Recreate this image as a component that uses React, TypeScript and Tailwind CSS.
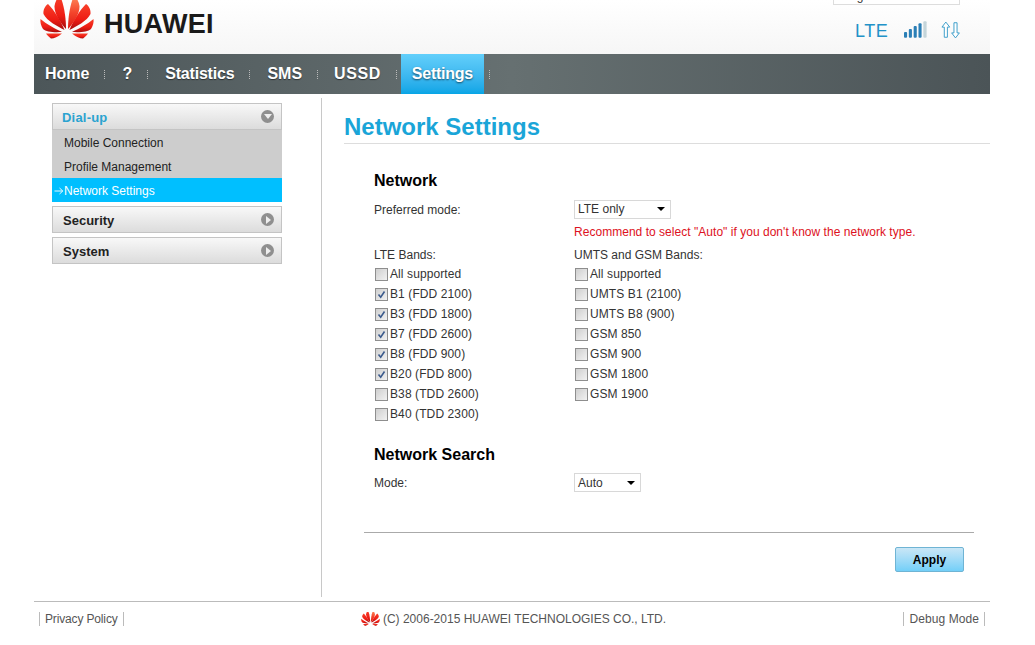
import * as React from "react";

const arial = "font-['Liberation_Sans',Arial,sans-serif]";

const lteBands = [
  { label: "All supported", on: false },
  { label: "B1 (FDD 2100)", on: true },
  { label: "B3 (FDD 1800)", on: true },
  { label: "B7 (FDD 2600)", on: true },
  { label: "B8 (FDD 900)", on: true },
  { label: "B20 (FDD 800)", on: true },
  { label: "B38 (TDD 2600)", on: false },
  { label: "B40 (TDD 2300)", on: false },
];

const umtsBands = ["All supported", "UMTS B1 (2100)", "UMTS B8 (900)", "GSM 850", "GSM 900", "GSM 1800", "GSM 1900"];

const navItems = [
  { label: "Home", track: "" },
  { label: "?", track: "" },
  { label: "Statistics", track: "tracking-[-0.2px]" },
  { label: "SMS", track: "" },
  { label: "USSD", track: "-ml-px tracking-[0.6px]" },
];

function Petals({ className, id }: { className: string; id: string }) {
  const petals = [
    "M6 33.5 L22 33.5 C18 37 14 38.5 11 38.5 C9 37 7 35 6 33.5 Z",
    "M0.5 19 C6 24 16 29 22 32 C14 32.5 6 32 3 29 C1 26 0 22 0.5 19 Z",
    "M8 4 C14 10 21 21 24.5 30 C17 26 7 21 3.5 14 C3 10 5 6 8 4 Z",
    "M20 -4 C24 4 26 18 26 29 C21 24 14 14 14.5 6 C15 2 17 -2 20 -4 Z",
  ];
  return (
    <svg viewBox="0 0 54 39" className={className}>
      <defs>
        <linearGradient id={id} x1="0" y1="0" x2="0" y2="1">
          <stop offset="0" stopColor="#f8402a" />
          <stop offset="0.6" stopColor="#ee1c14" />
          <stop offset="1" stopColor="#a80d0d" />
        </linearGradient>
        <linearGradient id={`${id}Top`} x1="0" y1="0" x2="0" y2="1">
          <stop offset="0" stopColor="#ff8a5c" />
          <stop offset="0.5" stopColor="#f4452c" />
          <stop offset="1" stopColor="#dd1712" />
        </linearGradient>
      </defs>
      {petals.map((d) => (
        <path key={d} d={d} fill={`url(#${id})`} />
      ))}
      <g transform="matrix(-1 0 0 1 54 0)">
        {petals.map((d, i) => (
          <path key={d} d={d} fill={i === 3 ? `url(#${id}Top)` : `url(#${id})`} />
        ))}
      </g>
    </svg>
  );
}

function Checkbox({ on }: { on: boolean }) {
  return (
    <span className="flex h-[13px] w-[13px] shrink-0 items-center justify-center border border-[#8e8e8e] bg-gradient-to-br from-[#cfcfcf] to-[#f2f2f2]">
      {on && (
        <svg viewBox="0 0 11 11" className="h-[11px] w-[11px]">
          <path d="M2.5 5.5 L4.7 8.2 L8.5 2.5" fill="none" stroke="#3b5a8c" strokeWidth="1.6" />
        </svg>
      )}
    </span>
  );
}

function Band({ label, on }: { label: string; on: boolean }) {
  return (
    <label className="flex h-5 items-center gap-[2px] pl-px text-[12px] tracking-[0.1px] text-[#333]">
      <Checkbox on={on} />
      <span>{label}</span>
    </label>
  );
}

function Select({ value, width }: { value: string; width: string }) {
  return (
    <div className={`flex h-[19px] items-center justify-between border border-[#d8d8d8] pl-[3px] pr-[4px] text-[12px] text-[#333] ${width}`}>
      <span>{value}</span>
      <span className="mr-[1px] h-0 w-0 border-x-[4px] border-t-[4px] border-x-transparent border-t-black" />
    </div>
  );
}

function SideHead({ label, open }: { label: string; open?: boolean }) {
  return (
    <div className="flex h-[27px] items-center justify-between border border-[#c4c4c4] bg-gradient-to-b from-[#f8f8f8] to-[#dcdcdc] pl-[10px] pr-[7px]">
      <span className={`pt-[3px] text-[13px] font-bold ${open ? "-ml-px tracking-[0.2px] text-[#2ba3d0]" : "text-[#222]"}`}>{label}</span>
      <span className="flex h-[13px] w-[13px] items-center justify-center rounded-full bg-[#8f8f8f]">
        {open ? (
          <span className="h-0 w-0 border-x-[4px] border-t-[5px] border-x-transparent border-t-[#eee]" />
        ) : (
          <span className="ml-px h-0 w-0 border-y-[4px] border-l-[5px] border-y-transparent border-l-[#eee]" />
        )}
      </span>
    </div>
  );
}

export default function App() {
  return (
    <div className={`${arial} h-[645px] w-[1035px] overflow-hidden bg-white pl-[34px]`}>
      <div className="w-[956px]">
        {/* top bar */}
        <div className="h-[54px] bg-gradient-to-b from-white to-[#f6f6f6]">
          <div className="flex h-full">
            <div className="ml-[6px] flex h-[39px] items-start overflow-hidden">
              <Petals id="logoBig" className="h-[39px] w-[54px]" />
              <span className="ml-[10px] mt-[10px] text-[27px] leading-[28px] font-bold tracking-[0.3px] text-[#1a1a1a]">HUAWEI</span>
            </div>
            <div className="ml-auto mr-[30px] flex w-[127px] flex-col items-stretch">
              <div className="h-[5px] overflow-hidden border border-t-0 border-[#ddd] bg-white">
                <div className="-mt-[11px] pl-[8px] text-[12px] leading-[14px] text-[#333]">English</div>
              </div>
              <div className="mt-[16px] flex h-[20px] items-center">
                <span className="ml-[22px] text-[18px] leading-[20px] tracking-[0.6px] text-[#2292c8]">LTE</span>
                <svg viewBox="0 0 25 17" className="mb-[3px] ml-[16px] h-[17px] w-[25px]">
                  <rect x="0" y="11" width="3.2" height="6" rx="1" fill="#2b7fb6" />
                  <rect x="5" y="8" width="3.2" height="9" rx="1" fill="#2b7fb6" />
                  <rect x="10" y="5" width="3.2" height="12" rx="1" fill="#2b7fb6" />
                  <rect x="15" y="2" width="3.2" height="15" rx="1" fill="#2b7fb6" />
                  <rect x="20" y="0" width="3.4" height="17" rx="1" fill="#c5d5da" />
                </svg>
                <svg viewBox="0 0 20 18" className="mb-[3px] ml-[12px] h-[18px] w-[20px]">
                  <path d="M5 0.8 L9 6 H6.6 V16.5 H3.4 V6 H1 Z" fill="white" stroke="#3a9dc9" strokeWidth="1" />
                  <path d="M15 17.2 L19 12 H16.6 V1.5 H13.4 V12 H11 Z" fill="white" stroke="#3a9dc9" strokeWidth="1" />
                </svg>
              </div>
            </div>
          </div>
        </div>

        {/* nav */}
        <nav className="flex h-10 items-stretch bg-gradient-to-r from-[#4c5659] via-[#667071] to-[#4b5457] pl-[11px] text-[16px] font-bold text-white">
          {navItems.map((item) => (
            <React.Fragment key={item.label}>
              <span className={`flex items-center [text-shadow:0_1px_1px_rgba(0,0,0,0.5)] ${item.track}`}>{item.label}</span>
              <span className="my-auto ml-[15px] mr-[17px] h-[9px] w-px border-l border-dotted border-[#bbb]" />
            </React.Fragment>
          ))}
          <span className="-ml-[13px] flex w-[83px] items-center justify-center bg-gradient-to-b from-[#62cffb] to-[#05a5e6] tracking-[-0.25px] [text-shadow:0_1px_2px_rgba(0,0,0,0.6)]">
            Settings
          </span>
          <span className="mx-[5px] my-auto h-[9px] w-px border-l border-dotted border-[#bbb]" />
        </nav>

        {/* body */}
        <div className="flex h-[503px] pt-1">
          <aside className="h-[499px] w-[288px] border-r border-[#c8c8c8] pl-[18px] pt-[5px]">
            <div className="flex w-[230px] flex-col">
              <SideHead label="Dial-up" open />
              <div className="bg-[#cdcdcd] text-[12px] text-[#222]">
                <div className="flex h-6 items-center pl-3 pt-px">Mobile Connection</div>
                <div className="flex h-6 items-center pl-3 pt-px">Profile Management</div>
                <div className="flex h-6 items-center bg-[#00bfff] pl-[2px] pt-px text-white">
                  <svg viewBox="0 0 10 8" className="h-2 w-[10px]">
                    <path d="M0.5 4 H8.5 M5.5 1 L8.8 4 L5.5 7" fill="none" stroke="white" strokeWidth="0.9" />
                  </svg>
                  Network Settings
                </div>
              </div>
              <div className="mt-1">
                <SideHead label="Security" />
              </div>
              <div className="mt-1">
                <SideHead label="System" />
              </div>
            </div>
          </aside>

          <main className="flex-1 pl-[22px]">
            <h1 className="flex h-[46px] items-end border-b border-[#ddd] text-[24px] leading-[32px] font-bold text-[#1aa5d8]">
              Network Settings
            </h1>

            <div className="pl-[30px] pt-[27px]">
              <h2 className="text-[16px] leading-[20px] font-bold text-black">Network</h2>
              <div className="mt-[8px] grid grid-cols-[200px_1fr] items-center text-[12px] text-[#333]">
                <span className="mt-[2px]">Preferred mode:</span>
                <Select value="LTE only" width="w-[97px]" />
              </div>
              <div className="mt-[5px] pl-[200px] text-[12px] leading-[16px] tracking-[0.03px] text-[#dd1122]">
                Recommend to select "Auto" if you don't know the network type.
              </div>
              <div className="mt-[5px] grid grid-cols-[200px_1fr] text-[12px] text-[#333]">
                <div>
                  <div className="flex h-[19px] items-center">LTE Bands:</div>
                  {lteBands.map((b) => (
                    <Band key={b.label} label={b.label} on={b.on} />
                  ))}
                </div>
                <div>
                  <div className="flex h-[19px] items-center">UMTS and GSM Bands:</div>
                  {umtsBands.map((b) => (
                    <Band key={b} label={b} on={false} />
                  ))}
                </div>
              </div>

              <h2 className="mt-[21px] text-[16px] leading-[20px] font-bold text-black">Network Search</h2>
              <div className="mt-[8px] grid grid-cols-[200px_1fr] items-center text-[12px] text-[#333]">
                <span>Mode:</span>
                <Select value="Auto" width="w-[67px]" />
              </div>
            </div>

            <div className="ml-5 mr-4 mt-[40px] border-t border-[#aaa]" />
            <div className="mr-[26px] mt-[14px] flex justify-end">
              <button className="flex h-[25px] w-[69px] items-center justify-center rounded-[2px] border border-[#6fb4d4] bg-gradient-to-b from-[#c9e6f6] to-[#72cff8] text-[12px] font-bold text-black">
                Apply
              </button>
            </div>
          </main>
        </div>

        {/* footer */}
        <footer className="mt-1 flex h-[34px] items-center justify-between border-t border-[#bbb] px-[5px] text-[12px] text-[#555]">
          <span className="border-x border-[#bbb] px-[5px] leading-[14px] tracking-[-0.15px]">Privacy Policy</span>
          <span className="flex items-center">
            <Petals id="logoSmall" className="mr-[3px] h-[14px] w-[19px]" />
            (C) 2006-2015 HUAWEI TECHNOLOGIES CO., LTD.
          </span>
          <span className="border-x border-[#bbb] pl-[5px] pr-[5px] leading-[14px] tracking-[0.08px]">Debug Mode</span>
        </footer>
      </div>
    </div>
  );
}
